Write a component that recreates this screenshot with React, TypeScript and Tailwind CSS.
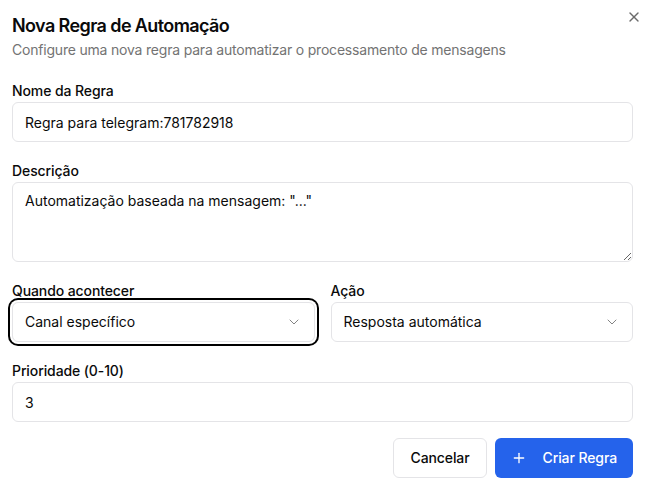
import { ChevronDown, Plus, X } from "lucide-react";

type SelectProps = {
  value: string;
  focused?: boolean;
};

const FakeSelect = (props: SelectProps) => {
  return (
    <button
      type="button"
      className={`flex h-10 w-full items-center justify-between rounded-md border border-[#e4e4e7] bg-white px-3 text-sm text-[#0a0a0a] ${
        props.focused ? "ring-2 ring-black ring-offset-2" : ""
      }`}
    >
      <span>{props.value}</span>
      <ChevronDown className="h-4 w-4 text-[#0a0a0a] opacity-50" strokeWidth={1.5} />
    </button>
  );
};

export default function App() {
  return (
    <div
      className="relative min-h-[499px] w-[651px] bg-white pl-3 pr-[18px] pt-3 text-[#0a0a0a]"
      style={{ fontFamily: "Inter, 'Noto Sans', sans-serif" }}
    >
      {/* fechar */}
      <button type="button" className="absolute right-[9px] top-[9px] text-[#6b6b6b]">
        <X className="h-4 w-4" strokeWidth={2} />
      </button>

      {/* cabeçalho */}
      <h2 className="text-lg font-semibold leading-7 tracking-[-0.6px]">Nova Regra de Automação</h2>
      <p className="text-sm leading-5 tracking-[-0.2px] text-[#737373]">
        Configure uma nova regra para automatizar o processamento de mensagens
      </p>

      <form className="mt-6 flex flex-col gap-[22px]">
        <div>
          <label className="block text-sm font-medium leading-none tracking-[-0.1px]">Nome da Regra</label>
          <input
            className="mt-1 h-10 w-full rounded-md border border-[#e4e4e7] px-3 text-sm outline-none"
            defaultValue="Regra para telegram:781782918"
          />
        </div>

        <div>
          <label className="block text-sm font-medium leading-none tracking-[-0.1px]">Descrição</label>
          <textarea
            className="mt-1 block h-20 w-full rounded-md border border-[#e4e4e7] px-3 py-2 text-sm leading-5 outline-none"
            defaultValue={'Automatização baseada na mensagem: "..."'}
          />
        </div>

        <div className="grid grid-cols-2 gap-4">
          <div>
            <label className="block text-sm font-medium leading-none tracking-[-0.1px]">Quando acontecer</label>
            <div className="mt-1">
              <FakeSelect value="Canal específico" focused />
            </div>
          </div>
          <div>
            <label className="block text-sm font-medium leading-none tracking-[-0.1px]">Ação</label>
            <div className="mt-1">
              <FakeSelect value="Resposta automática" />
            </div>
          </div>
        </div>

        <div>
          <label className="block text-sm font-medium leading-none tracking-[-0.1px]">Prioridade (0-10)</label>
          <input
            className="mt-1 h-10 w-full rounded-md border border-[#e4e4e7] px-3 text-sm outline-none"
            defaultValue="3"
          />
        </div>
      </form>

      {/* botões */}
      <div className="mt-4 flex justify-end gap-2">
        <button
          type="button"
          className="h-10 rounded-md border border-[#e4e4e7] bg-white px-4 text-sm font-medium tracking-[-0.1px]"
        >
          Cancelar
        </button>
        <button
          type="button"
          className="flex h-10 items-center gap-4 rounded-md bg-[#2563eb] px-4 text-sm font-medium tracking-[-0.1px] text-white"
        >
          <Plus className="h-4 w-4" strokeWidth={2} />
          Criar Regra
        </button>
      </div>
    </div>
  );
}
